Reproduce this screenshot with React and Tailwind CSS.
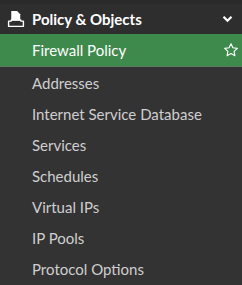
import React from 'react';

const items = [
  'Addresses',
  'Internet Service Database',
  'Services',
  'Schedules',
  'Virtual IPs',
  'IP Pools',
  'Protocol Options',
];

const PolicyIcon = () => (
  <svg width="18" height="18" viewBox="0 0 17 17" className="shrink-0">
    <path d="M4 1h5.5l3 3v6H4z" fill="#fff" />
    <path d="M1.5 10.5h2.5v-1h9v1h2.5v5h-14z" fill="none" stroke="#fff" strokeWidth="1.3" strokeLinejoin="round" />
  </svg>
);

const Chevron = () => (
  <svg width="11" height="8" viewBox="0 0 11 8">
    <path d="M1.5 1.8l4 4 4-4" fill="none" stroke="#fff" strokeWidth="2.2" />
  </svg>
);

const Star = () => (
  <svg width="16" height="16" viewBox="0 0 24 24">
    <path
      d="M12 2.5l2.9 6.2 6.6.8-4.9 4.6 1.3 6.6L12 17.4l-5.9 3.3 1.3-6.6-4.9-4.6 6.6-.8z"
      fill="none"
      stroke="#fff"
      strokeWidth="1.7"
      strokeLinejoin="round"
    />
  </svg>
);

export default function App() {
  return (
    <div
      className="w-[242px] h-[285px] bg-[#333333] overflow-hidden"
      style={{ fontFamily: 'Lato, "Open Sans", sans-serif' }}
    >
      <div className="h-[4px] bg-[#2a2a2a]" />
      <div className="h-[30px] bg-[#2e2e2e] flex items-center pl-[7px] pr-[9px]">
        <PolicyIcon />
        <span className="ml-[7px] text-[15px] font-bold text-white flex-1">Policy &amp; Objects</span>
        <Chevron />
      </div>
      <div className="h-[33px] bg-[#3e8a4c] border-b border-[#5a7a5f] flex items-center pl-[32px] pr-[3px]">
        <span className="flex-1 text-[15px] text-white">Firewall Policy</span>
        <Star />
      </div>
      {items.map((label) => (
        <div key={label} className="h-[31px] flex items-center pl-[32px] pt-[2px] text-[15px] text-[#cfcfcf]">
          {label}
        </div>
      ))}
    </div>
  );
}
